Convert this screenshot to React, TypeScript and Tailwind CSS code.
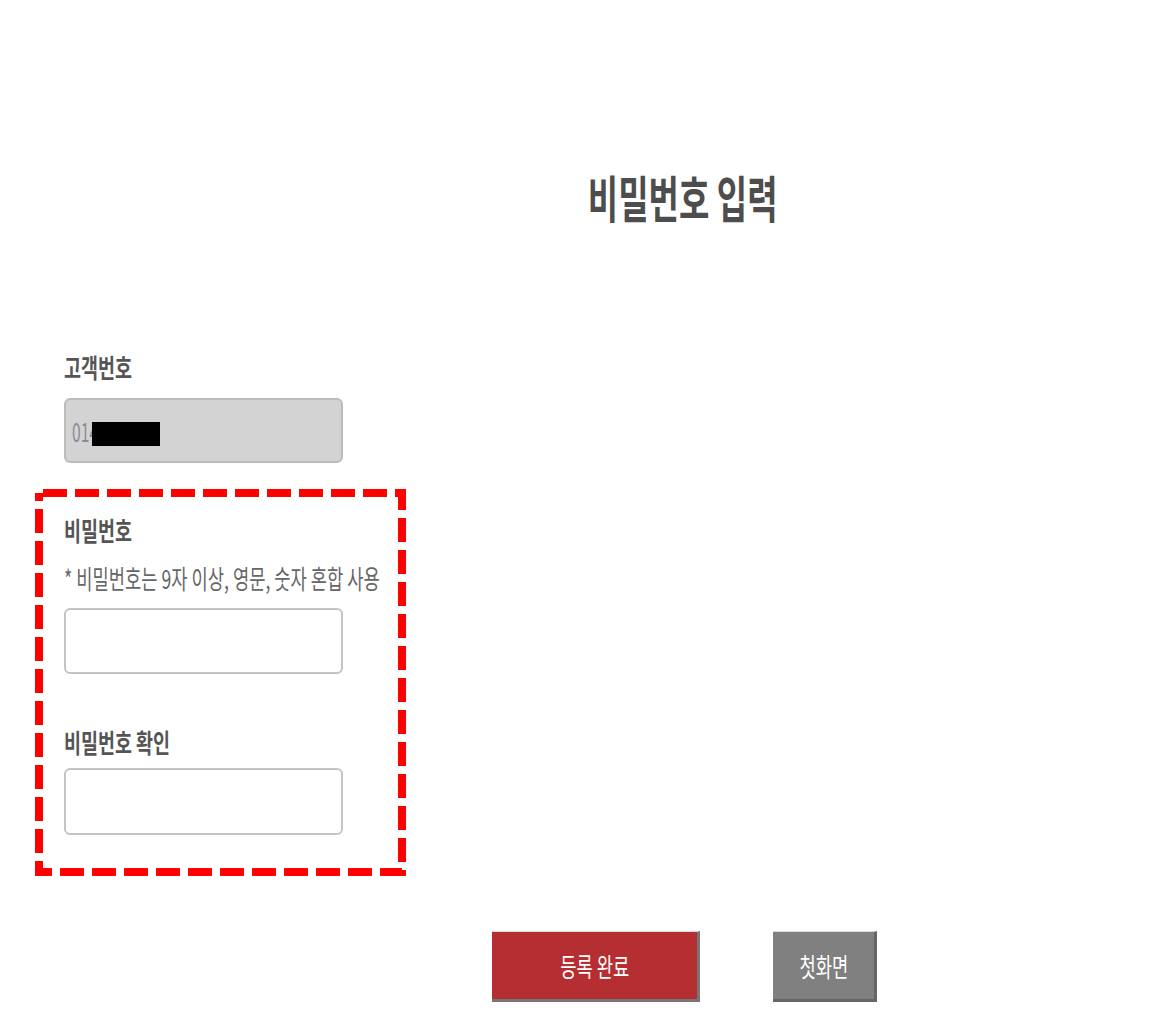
import React from "react";

const F = "font-['Noto_Sans_CJK_KR','Noto_Sans',sans-serif]";

function T({ children, className = "" }: { children: React.ReactNode; className?: string }) {
  return (
    <span className={`inline-block whitespace-nowrap origin-left scale-x-[0.71] ${className}`}>{children}</span>
  );
}

export default function App() {
  return (
    <div className={`min-h-[1023px] w-full bg-white ${F}`}>
      <div className="flex justify-center pt-[171px] pl-[214px]">
        <h1 className="text-[50px] leading-none font-bold text-[#4d4d4d] whitespace-nowrap">
          <span className="inline-block origin-center scale-x-[0.66]">비밀번호 입력</span>
        </h1>
      </div>

      <div className="ml-[64px] mt-[133px]">
        <div className="text-[26px] leading-none font-bold text-[#555] h-[26px]">
          <T>고객번호</T>
        </div>
        <div className="relative mt-[18px] h-[65px] w-[279px] rounded-[6px] border-2 border-[#bcbcbc] bg-[#d3d3d3] flex items-center pl-[6px]">
          <span className="text-[27px] leading-none text-[#8a8a96] inline-block origin-left scale-x-[0.58]">0144</span>
          <div className="absolute left-[26px] top-[22px] h-[24px] w-[68px] bg-black" />
        </div>
      </div>

      <div className="relative ml-[35px] mt-[26px] w-[371px] border-[8px] border-transparent pl-[21px] pt-[20px] pb-[33px]">
        <svg className="absolute -left-[8px] -top-[8px] pointer-events-none" width="371" height="387" viewBox="0 0 371 387">
          <rect x="4" y="4" width="363" height="379" fill="none" stroke="#ff0000" strokeWidth="8" strokeDasharray="24 8" strokeDashoffset="-4" />
        </svg>
        <div className="text-[26px] leading-none font-bold text-[#555] h-[26px]">
          <T>비밀번호</T>
        </div>
        <div className="mt-[22px] text-[26px] leading-none text-[#666] h-[26px]">
          <span className="inline-block whitespace-nowrap origin-left scale-x-[0.68]">* 비밀번호는 9자 이상, 영문, 숫자 혼합 사용</span>
        </div>
        <div className="mt-[17px] h-[66px] w-[279px] rounded-[6px] border-2 border-[#c4c4c4] bg-white" />
        <div className="mt-[55px] text-[26px] leading-none font-bold text-[#555] h-[26px]">
          <T>비밀번호 확인</T>
        </div>
        <div className="mt-[13px] h-[67px] w-[279px] rounded-[6px] border-2 border-[#c4c4c4] bg-white" />
      </div>

      <div className="ml-[492px] mt-[55px] flex items-start gap-[73px]">
        <button className="h-[71px] w-[208px] bg-[#b52e31] border-t border-t-[#d9d9d9] border-r-[3px] border-b-[3px] border-r-[#777] border-b-[#777] text-white text-[26px] leading-none flex items-center justify-center">
          <span className="inline-block origin-center scale-x-[0.68] whitespace-nowrap">등록 완료</span>
        </button>
        <button className="h-[71px] w-[104px] bg-[#808080] border-t border-t-[#d9d9d9] border-r-[3px] border-b-[3px] border-r-[#666] border-b-[#666] text-white text-[26px] leading-none flex items-center justify-center">
          <span className="inline-block origin-center scale-x-[0.68] whitespace-nowrap">첫화면</span>
        </button>
      </div>
    </div>
  );
}
